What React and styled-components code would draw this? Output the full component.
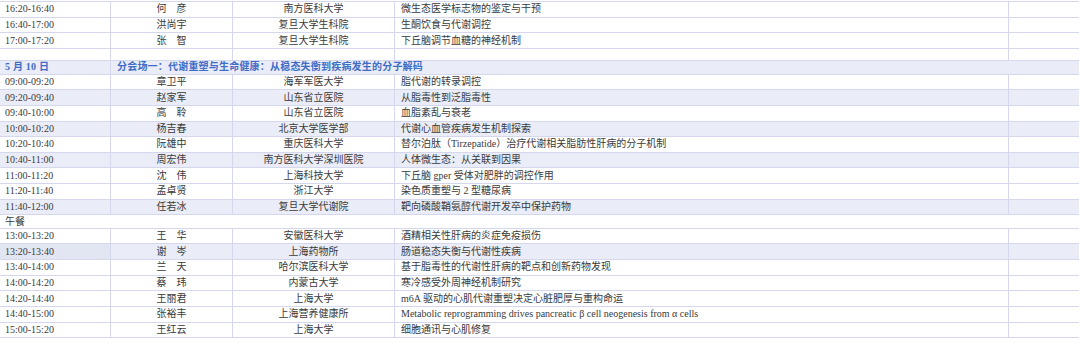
import React from "react";
import styled, { createGlobalStyle, css } from "styled-components";

const Global = createGlobalStyle`
  html, body { margin: 0; padding: 0; background: #ffffff; }
  body {
    font-family: "Liberation Serif", "Noto Sans CJK SC", serif;
    color: #3a3a3a;
    -webkit-font-smoothing: antialiased;
  }
`;

const LINE = "#d5d8ec";
const SHADE = "#eaedf7";

const Table = styled.div`
  width: 1079px;
  margin-top: 1px;
  border-top: 1px solid ${LINE};
  font-size: 10px;
  line-height: 1;
`;

const Row = styled.div`
  display: grid;
  grid-template-columns: 111px 122px 162px 614px 70px;
  box-sizing: border-box;
  height: ${(p) => p.$h}px;
  border-bottom: 1px solid ${LINE};
  background: ${(p) => (p.$shaded ? SHADE : "#ffffff")};
`;

const Cell = styled.div`
  display: flex;
  align-items: center;
  box-sizing: border-box;
  overflow: hidden;
  white-space: nowrap;
  border-right: ${(p) => (p.$last ? "none" : `1px solid ${LINE}`)};
  justify-content: ${(p) => (p.$center ? "center" : "flex-start")};
  padding-left: ${(p) => (p.$center ? 0 : p.$pad ?? 5)}px;
  ${(p) =>
    p.$dark &&
    css`
      background: #e2e6f3;
    `}
`;

const HeadCell = styled(Cell)`
  color: #3f6cc6;
  font-weight: 700;
  letter-spacing: 0.2px;
  ${(p) =>
    p.$span &&
    css`
      grid-column: 2 / -1;
      border-right: none;
    `}
`;

const FullCell = styled(Cell)`
  grid-column: 1 / -1;
  border-right: none;
`;

const NORMAL = 15.65;

const block1 = [
  ["16:20-16:40", "何　彦", "南方医科大学", "微生态医学标志物的鉴定与干预"],
  ["16:40-17:00", "洪尚宇", "复旦大学生科院", "生酮饮食与代谢调控"],
  ["17:00-17:20", "张　智", "复旦大学生科院", "下丘脑调节血糖的神经机制"],
];

const block2 = [
  ["09:00-09:20", "章卫平", "海军军医大学", "脂代谢的转录调控"],
  ["09:20-09:40", "赵家军", "山东省立医院", "从脂毒性到泛脂毒性", true],
  ["09:40-10:00", "高　聆", "山东省立医院", "血脂紊乱与衰老"],
  ["10:00-10:20", "杨吉春", "北京大学医学部", "代谢心血管疾病发生机制探索", true],
  ["10:20-10:40", "阮雄中", "重庆医科大学", "替尔泊肽（Tirzepatide）治疗代谢相关脂肪性肝病的分子机制"],
  ["10:40-11:00", "周宏伟", "南方医科大学深圳医院", "人体微生态：从关联到因果", true],
  ["11:00-11:20", "沈　伟", "上海科技大学", "下丘脑 gper 受体对肥胖的调控作用"],
  ["11:20-11:40", "孟卓贤", "浙江大学", "染色质重塑与 2 型糖尿病"],
  ["11:40-12:00", "任若冰", "复旦大学代谢院", "靶向磷酸鞘氨醇代谢开发卒中保护药物", true],
];

const block3 = [
  ["13:00-13:20", "王　华", "安徽医科大学", "酒精相关性肝病的炎症免疫损伤"],
  ["13:20-13:40", "谢　岑", "上海药物所", "肠道稳态失衡与代谢性疾病", true, true],
  ["13:40-14:00", "兰　天", "哈尔滨医科大学", "基于脂毒性的代谢性肝病的靶点和创新药物发现"],
  ["14:00-14:20", "蔡　玮", "内蒙古大学", "寒冷感受外周神经机制研究"],
  ["14:20-14:40", "王丽君", "上海大学", "m6A 驱动的心肌代谢重塑决定心脏肥厚与重构命运"],
  ["14:40-15:00", "张裕丰", "上海营养健康所", "Metabolic reprogramming drives pancreatic β cell neogenesis from α cells"],
  ["15:00-15:20", "王红云", "上海大学", "细胞通讯与心肌修复"],
];

function TalkRow({ data }) {
  const [time, name, inst, topic, shaded, dark] = data;
  return (
    <Row $h={NORMAL} $shaded={shaded}>
      <Cell $dark={dark}>{time}</Cell>
      <Cell $center>{name}</Cell>
      <Cell $center>{inst}</Cell>
      <Cell $pad={6}>{topic}</Cell>
      <Cell $last />
    </Row>
  );
}

export default function App() {
  return (
    <>
      <Global />
      <Table>
        {block1.map((r) => (
          <TalkRow key={r[0]} data={r} />
        ))}
        <Row $h={11.7}>
          <Cell />
          <Cell />
          <Cell />
          <Cell />
          <Cell $last />
        </Row>
        <Row $h={14} $shaded>
          <HeadCell>5 月 10 日</HeadCell>
          <HeadCell $span $pad={6}>
            分会场一：代谢重塑与生命健康：从稳态失衡到疾病发生的分子解码
          </HeadCell>
        </Row>
        {block2.map((r) => (
          <TalkRow key={r[0]} data={r} />
        ))}
        <Row $h={13.3}>
          <FullCell>午餐</FullCell>
        </Row>
        {block3.map((r) => (
          <TalkRow key={r[0]} data={r} />
        ))}
      </Table>
    </>
  );
}
